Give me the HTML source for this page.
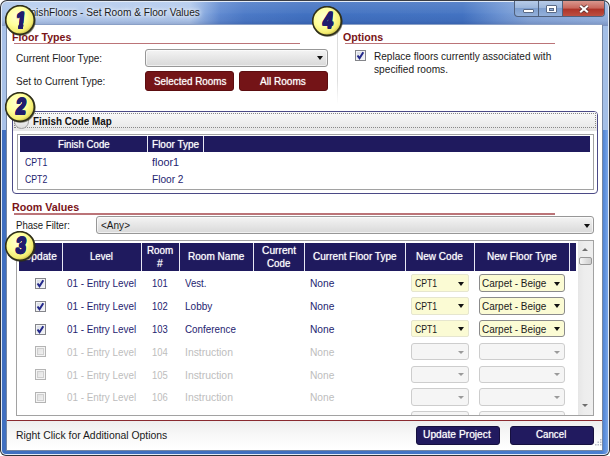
<!DOCTYPE html>
<html>
<head>
<meta charset="utf-8">
<title>FinishFloors - Set Room &amp; Floor Values</title>
<style>
html,body{margin:0;padding:0;}
body{width:610px;height:456px;overflow:hidden;position:relative;background:#fff;font-family:"Liberation Sans",sans-serif;font-size:10.5px;color:#1a1a1a;}
.a{position:absolute;box-sizing:border-box;}
.t{position:absolute;white-space:nowrap;line-height:14px;height:14px;transform-origin:0 0;}
.ul{position:absolute;height:1.5px;background:#bb7478;}
.rbtn{position:absolute;box-sizing:border-box;background:#741417;border:1px solid #5c0d10;border-radius:3px;}
.bbtn{position:absolute;box-sizing:border-box;background:#211a5f;border:1px solid #16103f;border-radius:3px;}
.combo{position:absolute;box-sizing:border-box;border:1px solid #979797;border-radius:3px;background:linear-gradient(#f4f4f4,#e6e6e6 50%,#d9d9d9);box-shadow:inset 0 0 0 1px rgba(255,255,255,.6);}
.hdr{position:absolute;background:#1f1a5e;}
.vs{position:absolute;width:1px;background:#e8e8f4;}
.arr{position:absolute;width:0;height:0;border-left:3.5px solid transparent;border-right:3.5px solid transparent;border-top:4px solid #111;}
.arrg{position:absolute;width:0;height:0;border-left:3px solid transparent;border-right:3px solid transparent;border-top:3.5px solid #9a9a9a;}
.yc{position:absolute;box-sizing:border-box;background:#fbfbd4;border:1px solid #e6e6cf;border-radius:2px;}
.yc2{position:absolute;box-sizing:border-box;background:#fbfbd4;border:1px solid #8b8b8b;border-radius:3px;}
.dc{position:absolute;box-sizing:border-box;background:#f5f5f5;border:1px solid #cdcdcd;border-radius:3px;}
.cb{position:absolute;box-sizing:border-box;width:11px;height:11px;border:1px solid #84858a;background:linear-gradient(135deg,#d4d9e2,#f6f6f9);box-shadow:inset 0 0 0 1px #f2f3f6;}
.cb svg{position:absolute;left:0;top:0;}
.cbd{position:absolute;box-sizing:border-box;width:11px;height:11px;border:1px solid #b4b4b4;background:linear-gradient(135deg,#dcdcdc,#f6f6f6);box-shadow:inset 0 0 0 1px #f4f4f4, inset 0 0 0 2px #cfcfcf;}
.badge{position:absolute;width:30px;height:30px;}
.num{position:absolute;width:30px;height:26px;line-height:26px;text-align:center;font-weight:bold;font-size:22.5px;color:#211c6e;text-shadow:1.00px 0.00px 0 #211c6e,0.71px 0.71px 0 #211c6e,0.00px 1.00px 0 #211c6e,-0.71px 0.71px 0 #211c6e,-1.00px 0.00px 0 #211c6e,-0.71px -0.71px 0 #211c6e,-0.00px -1.00px 0 #211c6e,0.71px -0.71px 0 #211c6e;transform:skewX(-6deg) scaleX(0.8);transform-origin:50% 50%;}
</style>
</head>
<body>
<!-- window frame -->
<div class="a" style="left:0;top:0;width:610px;height:456px;border-radius:7px 7px 6px 6px;background:#30333a;"></div>
<div class="a" style="left:1px;top:1px;width:608px;height:454px;border-radius:6px 6px 5px 5px;background:#e4ecf7;"></div>
<!-- title gradient -->
<div class="a" style="left:2px;top:2px;width:606px;height:128px;border-radius:5px 5px 0 0;background:linear-gradient(to right,#a9c3e8 0%,#b5ccee 5%,#b1c9ec 31%,#86a8de 33.5%,#5f89d0 36%,#4c7ac7 40%,#4171c1 50%,#4373c2 76%,#6a92d2 82%,#88a8da 87%,#98b4e0 100%);"></div>
<div class="a" style="left:2px;top:2px;width:606px;height:24px;border-radius:5px 5px 0 0;background:linear-gradient(to bottom,rgba(255,255,255,.12) 0%,rgba(255,255,255,.04) 45%,rgba(0,0,40,.0) 50%,rgba(0,10,70,.06) 78%,rgba(0,10,70,.20) 100%);"></div>
<!-- sides lower -->
<div class="a" style="left:2px;top:130px;width:606px;height:324px;border-radius:0 0 4px 4px;background:linear-gradient(to right,#3f6fc0 0,#3f6fc0 50%,#4a7fd0 99%,#5f90dc 99.5%,#7aa6e8 100%);"></div>
<div class="a" style="left:2px;top:26px;width:5px;height:104px;background:#a9c2e8;"></div>
<div class="a" style="left:603px;top:26px;width:5px;height:104px;background:#a3bee6;"></div>
<!-- client -->
<div class="a" style="left:6px;top:24px;width:597px;height:427px;background:#fff;border:1px solid #7486a4;border-top-color:#8aa0c6;"></div>
<div class="a" style="left:7px;top:25px;width:595px;height:425px;background:#fff;"></div>

<!-- caption buttons -->
<div class="a" style="left:514px;top:0.5px;width:91px;height:16.5px;border:1px solid #50607c;border-top:none;border-radius:0 0 4px 4px;background:linear-gradient(#b7cbe8,#9db7dc 45%,#7f9fcf 50%,#93b0da);overflow:hidden;">
  <div class="a" style="left:47px;top:0;width:43px;height:16px;background:linear-gradient(#d9978e,#c8665b 45%,#ad3328 50%,#bf5345);"></div>
  <div class="a" style="left:23px;top:0;width:1px;height:16px;background:#50607c;"></div>
  <div class="a" style="left:47px;top:0;width:1px;height:16px;background:#50607c;"></div>
  <div class="a" style="left:8px;top:8px;width:11px;height:4px;background:#fff;border:1px solid #5a6a86;border-radius:1px;"></div>
  <div class="a" style="left:31px;top:4px;width:11px;height:8px;border:1px solid #5a6a86;background:#fff;border-radius:1px;"></div>
  <div class="a" style="left:34px;top:7px;width:5px;height:3px;border:1px solid #5a6a86;background:#8fabd6;"></div>
  <svg class="a" style="left:63px;top:3px;" width="12" height="10" viewBox="0 0 12 10"><path d="M2.2 1.8 L9.8 8.2 M9.8 1.8 L2.2 8.2" stroke="#5a3434" stroke-width="3.6" stroke-linecap="butt"/><path d="M2.2 1.8 L9.8 8.2 M9.8 1.8 L2.2 8.2" stroke="#fff" stroke-width="2.1" stroke-linecap="butt"/></svg>
</div>

<div class="a" style="left:8px;top:0;width:594px;height:1px;background:#3a3d44;"></div>
<!-- Floor types -->
<div class="ul" style="left:14px;top:42.5px;width:286px;"></div>
<div class="combo" style="left:145px;top:49px;width:183px;height:18px;"></div>
<div class="arr" style="left:317px;top:56px;"></div>
<div class="rbtn" style="left:145px;top:71px;width:89px;height:20px;"></div>
<div class="rbtn" style="left:239px;top:71px;width:89px;height:20px;"></div>
<div class="a" style="left:337px;top:26px;width:1px;height:78px;background:linear-gradient(#dcdcdc 0%,#dedede 70%,#fff 100%);"></div>

<!-- Options -->
<div class="ul" style="left:345px;top:42.5px;width:210px;"></div>
<div class="cb" style="left:354.5px;top:50px;"><svg width="9" height="9" viewBox="0 0 9 9"><path d="M1.5 4.5 L3.5 7.2 L7.3 1.2" fill="none" stroke="#23288a" stroke-width="2"/></svg></div>

<!-- Finish code map -->
<div class="a" style="left:11.5px;top:111px;width:586px;height:83px;border:1px solid #4b4a86;border-radius:4px;background:#fff;"></div>
<div class="a" style="left:12.5px;top:112px;width:584px;height:19px;border-radius:3px 3px 0 0;background:linear-gradient(#fafafa,#e6e6e6);"></div>
<div class="a" style="left:13.5px;top:113px;width:582px;height:15px;border:1px dotted #888;"></div>
<div class="a" style="left:14px;top:114px;width:15px;height:15px;border-radius:50%;border:1px solid #a0a0a0;background:linear-gradient(#fff,#dcdcdc);"></div>
<div class="a" style="left:16.5px;top:134px;width:577px;height:56px;border:1px solid #a2a2a2;background:#fff;"></div>
<div class="hdr" style="left:19.5px;top:136px;width:570px;height:15.5px;"></div>
<div class="vs" style="left:147px;top:136px;height:15.5px;"></div>
<div class="vs" style="left:203px;top:136px;height:15.5px;"></div>

<!-- Room values -->
<div class="ul" style="left:14px;top:213px;width:541px;"></div>
<div class="combo" style="left:96px;top:215.8px;width:497.5px;height:18.2px;"></div>
<div class="arr" style="left:583.5px;top:223.5px;"></div>

<!-- grid -->
<div class="a" style="left:15.5px;top:240px;width:578px;height:176px;border:1px solid #a2a2a2;background:#fff;overflow:hidden;"></div>
<div class="hdr" style="left:18.5px;top:242.5px;width:557.5px;height:28.3px;"></div>
<div class="vs" style="left:61.5px;top:242.5px;height:28.3px;"></div>
<div class="vs" style="left:141px;top:242.5px;height:28.3px;"></div>
<div class="vs" style="left:179px;top:242.5px;height:28.3px;"></div>
<div class="vs" style="left:252.5px;top:242.5px;height:28.3px;"></div>
<div class="vs" style="left:303.5px;top:242.5px;height:28.3px;"></div>
<div class="vs" style="left:405px;top:242.5px;height:28.3px;"></div>
<div class="vs" style="left:473.5px;top:242.5px;height:28.3px;"></div>
<div class="vs" style="left:569.3px;top:242.5px;height:28.3px;"></div>
<div class="cb" style="left:35.3px;top:277.9px;"><svg width="9" height="9" viewBox="0 0 9 9"><path d="M1.5 4.5 L3.5 7.2 L7.3 1.2" fill="none" stroke="#23288a" stroke-width="2"/></svg></div>
<div class="yc" style="left:411px;top:274.2px;width:57.5px;height:17.5px;"></div>
<div class="arr" style="left:458px;top:281.5px;"></div>
<div class="yc2" style="left:479px;top:274.2px;width:86.3px;height:17.5px;"></div>
<div class="arr" style="left:553.6px;top:281.5px;"></div>
<div class="cb" style="left:35.3px;top:300.7px;"><svg width="9" height="9" viewBox="0 0 9 9"><path d="M1.5 4.5 L3.5 7.2 L7.3 1.2" fill="none" stroke="#23288a" stroke-width="2"/></svg></div>
<div class="yc" style="left:411px;top:297.0px;width:57.5px;height:17.5px;"></div>
<div class="arr" style="left:458px;top:304.3px;"></div>
<div class="yc2" style="left:479px;top:297.0px;width:86.3px;height:17.5px;"></div>
<div class="arr" style="left:553.6px;top:304.3px;"></div>
<div class="cb" style="left:35.3px;top:323.6px;"><svg width="9" height="9" viewBox="0 0 9 9"><path d="M1.5 4.5 L3.5 7.2 L7.3 1.2" fill="none" stroke="#23288a" stroke-width="2"/></svg></div>
<div class="yc" style="left:411px;top:319.9px;width:57.5px;height:17.5px;"></div>
<div class="arr" style="left:458px;top:327.2px;"></div>
<div class="yc2" style="left:479px;top:319.9px;width:86.3px;height:17.5px;"></div>
<div class="arr" style="left:553.6px;top:327.2px;"></div>
<div class="cbd" style="left:35.3px;top:346.4px;"></div>
<div class="dc" style="left:411px;top:342.7px;width:57.5px;height:17.5px;"></div>
<div class="arrg" style="left:458.3px;top:350.5px;"></div>
<div class="dc" style="left:479px;top:342.7px;width:86.3px;height:17.5px;"></div>
<div class="arrg" style="left:553.8px;top:350.5px;"></div>
<div class="cbd" style="left:35.3px;top:369.2px;"></div>
<div class="dc" style="left:411px;top:365.5px;width:57.5px;height:17.5px;"></div>
<div class="arrg" style="left:458.3px;top:373.3px;"></div>
<div class="dc" style="left:479px;top:365.5px;width:86.3px;height:17.5px;"></div>
<div class="arrg" style="left:553.8px;top:373.3px;"></div>
<div class="cbd" style="left:35.3px;top:392.0px;"></div>
<div class="dc" style="left:411px;top:388.3px;width:57.5px;height:17.5px;"></div>
<div class="arrg" style="left:458.3px;top:396.1px;"></div>
<div class="dc" style="left:479px;top:388.3px;width:86.3px;height:17.5px;"></div>
<div class="arrg" style="left:553.8px;top:396.1px;"></div>
<div class="a" style="left:16.5px;top:411.2px;width:560px;height:3.8px;overflow:hidden;">
<div class="dc" style="left:394.5px;top:0;width:57.5px;height:17.5px;"></div><div class="dc" style="left:462.5px;top:0;width:86.3px;height:17.5px;"></div></div>
<!-- scrollbar -->
<div class="a" style="left:577.5px;top:241px;width:15.5px;height:174px;background:linear-gradient(to right,#e6e6e6,#ededed 40%,#efefef);"></div>
<div class="a" style="left:581.5px;top:247.5px;width:0;height:0;border-left:3px solid transparent;border-right:3px solid transparent;border-bottom:3.5px solid #6e6e6e;"></div>
<div class="a" style="left:578.5px;top:256.5px;width:13px;height:8px;border:1px solid #979797;border-radius:2px;background:linear-gradient(to right,#f5f5f5,#dcdcdc 60%,#d0d0d0);"></div>
<div class="a" style="left:582px;top:404px;width:0;height:0;border-left:3px solid transparent;border-right:3px solid transparent;border-top:3.5px solid #6e6e6e;"></div>

<!-- bottom -->
<div class="a" style="left:7px;top:421px;width:595px;height:29px;background:linear-gradient(#eeeeee,#f8f8f8 50%,#ffffff);"></div>
<div class="a" style="left:7px;top:420px;width:595px;height:1px;background:#8a2a30;"></div>
<div class="bbtn" style="left:415.5px;top:425.5px;width:84px;height:19px;"></div>
<div class="bbtn" style="left:509.5px;top:425.5px;width:84px;height:19px;"></div>
<svg class="a" style="left:593px;top:438px;" width="10" height="11" viewBox="0 0 10 11"><g fill="#b8bcc8"><rect x="7" y="1" width="1.5" height="1.5"/><rect x="4.5" y="3.5" width="1.5" height="1.5"/><rect x="7" y="3.5" width="1.5" height="1.5"/><rect x="2" y="6" width="1.5" height="1.5"/><rect x="4.5" y="6" width="1.5" height="1.5"/><rect x="7" y="6" width="1.5" height="1.5"/></g></svg>

<div class="t" style="left:22.0px;top:5.0px;font-size:10.5px;color:#1c1c1c;transform:scaleX(0.966);text-shadow:0 0 4px #fff,0 0 6px #fff;">FinishFloors - Set Room &amp; Floor Values</div>
<div class="t" style="left:11.5px;top:30.0px;font-size:11px;color:#7a1418;transform:scaleX(0.964);font-weight:bold;">Floor Types</div>
<div class="t" style="left:15.7px;top:51.0px;font-size:10.5px;color:#1a1a1a;transform:scaleX(0.954);">Current Floor Type:</div>
<div class="t" style="left:15.7px;top:74.0px;font-size:10.5px;color:#1a1a1a;transform:scaleX(0.952);">Set to Current Type:</div>
<div class="t" style="left:153.6px;top:74.0px;font-size:10.5px;color:#fff;text-shadow:0 0 1px rgba(255,255,255,.75);transform:scaleX(0.940);">Selected Rooms</div>
<div class="t" style="left:260.0px;top:74.0px;font-size:10.5px;color:#fff;text-shadow:0 0 1px rgba(255,255,255,.75);transform:scaleX(0.957);">All Rooms</div>
<div class="t" style="left:343.3px;top:30.0px;font-size:11px;color:#7a1418;transform:scaleX(0.967);font-weight:bold;">Options</div>
<div class="t" style="left:374.3px;top:48.5px;font-size:10.5px;color:#1a1a1a;transform:scaleX(0.958);">Replace floors currently associated with</div>
<div class="t" style="left:374.3px;top:61.5px;font-size:10.5px;color:#1a1a1a;transform:scaleX(0.968);">specified rooms.</div>
<div class="t" style="left:32.8px;top:113.5px;font-size:10.5px;color:#111;transform:scaleX(0.937);font-weight:bold;">Finish Code Map</div>
<div class="t" style="left:57.7px;top:136.5px;font-size:10.5px;color:#fff;text-shadow:0 0 1px rgba(255,255,255,.75);transform:scaleX(0.923);">Finish Code</div>
<div class="t" style="left:151.8px;top:136.5px;font-size:10.5px;color:#fff;text-shadow:0 0 1px rgba(255,255,255,.75);transform:scaleX(0.955);">Floor Type</div>
<div class="t" style="left:24.9px;top:154.5px;font-size:10.5px;color:#1e2470;transform:scaleX(0.831);">CPT1</div>
<div class="t" style="left:151.8px;top:154.5px;font-size:10.5px;color:#1e2470;transform:scaleX(1.028);">floor1</div>
<div class="t" style="left:24.9px;top:172.0px;font-size:10.5px;color:#1e2470;transform:scaleX(0.831);">CPT2</div>
<div class="t" style="left:151.8px;top:172.0px;font-size:10.5px;color:#1e2470;transform:scaleX(0.964);">Floor 2</div>
<div class="t" style="left:11.5px;top:200.0px;font-size:11px;color:#7a1418;transform:scaleX(0.973);font-weight:bold;">Room Values</div>
<div class="t" style="left:15.7px;top:218.0px;font-size:10.5px;color:#1a1a1a;transform:scaleX(0.913);">Phase Filter:</div>
<div class="t" style="left:101.0px;top:218.0px;font-size:10.5px;color:#1a1a1a;transform:scaleX(0.955);">&lt;Any&gt;</div>
<div class="t" style="left:23.6px;top:249.0px;font-size:10.5px;color:#fff;text-shadow:0 0 1px rgba(255,255,255,.75);transform:scaleX(0.969);">Update</div>
<div class="t" style="left:90.0px;top:249.0px;font-size:10.5px;color:#fff;text-shadow:0 0 1px rgba(255,255,255,.75);transform:scaleX(0.912);">Level</div>
<div class="t" style="left:147.0px;top:242.5px;font-size:10.5px;color:#fff;text-shadow:0 0 1px rgba(255,255,255,.75);transform:scaleX(0.939);">Room</div>
<div class="t" style="left:157.3px;top:256.0px;font-size:10.5px;color:#fff;text-shadow:0 0 1px rgba(255,255,255,.75);transform:scaleX(0.993);">#</div>
<div class="t" style="left:188.3px;top:249.0px;font-size:10.5px;color:#fff;text-shadow:0 0 1px rgba(255,255,255,.75);transform:scaleX(0.957);">Room Name</div>
<div class="t" style="left:261.5px;top:242.5px;font-size:10.5px;color:#fff;text-shadow:0 0 1px rgba(255,255,255,.75);transform:scaleX(0.974);">Current</div>
<div class="t" style="left:267.0px;top:255.5px;font-size:10.5px;color:#fff;text-shadow:0 0 1px rgba(255,255,255,.75);transform:scaleX(0.932);">Code</div>
<div class="t" style="left:313.0px;top:249.0px;font-size:10.5px;color:#fff;text-shadow:0 0 1px rgba(255,255,255,.75);transform:scaleX(0.958);">Current Floor Type</div>
<div class="t" style="left:416.2px;top:249.0px;font-size:10.5px;color:#fff;text-shadow:0 0 1px rgba(255,255,255,.75);transform:scaleX(0.954);">New Code</div>
<div class="t" style="left:486.6px;top:249.0px;font-size:10.5px;color:#fff;text-shadow:0 0 1px rgba(255,255,255,.75);transform:scaleX(0.952);">New Floor Type</div>
<div class="t" style="left:66.9px;top:276.0px;font-size:10.5px;color:#1e2470;transform:scaleX(0.940);">01 - Entry Level</div>
<div class="t" style="left:152.3px;top:276.0px;font-size:10.5px;color:#1e2470;transform:scaleX(0.896);">101</div>
<div class="t" style="left:184.6px;top:276.0px;font-size:10.5px;color:#1e2470;transform:scaleX(0.920);">Vest.</div>
<div class="t" style="left:309.6px;top:276.0px;font-size:10.5px;color:#1e2470;transform:scaleX(0.972);">None</div>
<div class="t" style="left:415.0px;top:276.0px;font-size:10.5px;color:#1a1a1a;transform:scaleX(0.827);">CPT1</div>
<div class="t" style="left:482.1px;top:276.0px;font-size:10.5px;color:#1a1a1a;transform:scaleX(0.951);">Carpet - Beige</div>
<div class="t" style="left:66.9px;top:299.0px;font-size:10.5px;color:#1e2470;transform:scaleX(0.940);">01 - Entry Level</div>
<div class="t" style="left:152.3px;top:299.0px;font-size:10.5px;color:#1e2470;transform:scaleX(0.896);">102</div>
<div class="t" style="left:184.6px;top:299.0px;font-size:10.5px;color:#1e2470;transform:scaleX(0.954);">Lobby</div>
<div class="t" style="left:309.6px;top:299.0px;font-size:10.5px;color:#1e2470;transform:scaleX(0.972);">None</div>
<div class="t" style="left:415.0px;top:299.0px;font-size:10.5px;color:#1a1a1a;transform:scaleX(0.827);">CPT1</div>
<div class="t" style="left:482.1px;top:299.0px;font-size:10.5px;color:#1a1a1a;transform:scaleX(0.951);">Carpet - Beige</div>
<div class="t" style="left:66.9px;top:321.5px;font-size:10.5px;color:#1e2470;transform:scaleX(0.940);">01 - Entry Level</div>
<div class="t" style="left:152.3px;top:321.5px;font-size:10.5px;color:#1e2470;transform:scaleX(0.896);">103</div>
<div class="t" style="left:184.6px;top:321.5px;font-size:10.5px;color:#1e2470;transform:scaleX(0.937);">Conference</div>
<div class="t" style="left:309.6px;top:321.5px;font-size:10.5px;color:#1e2470;transform:scaleX(0.972);">None</div>
<div class="t" style="left:415.0px;top:321.5px;font-size:10.5px;color:#1a1a1a;transform:scaleX(0.827);">CPT1</div>
<div class="t" style="left:482.1px;top:321.5px;font-size:10.5px;color:#1a1a1a;transform:scaleX(0.951);">Carpet - Beige</div>
<div class="t" style="left:66.9px;top:344.5px;font-size:10.5px;color:#bdbdbd;transform:scaleX(0.940);">01 - Entry Level</div>
<div class="t" style="left:152.3px;top:344.5px;font-size:10.5px;color:#bdbdbd;transform:scaleX(0.896);">104</div>
<div class="t" style="left:184.6px;top:344.5px;font-size:10.5px;color:#bdbdbd;transform:scaleX(0.989);">Instruction</div>
<div class="t" style="left:309.6px;top:344.5px;font-size:10.5px;color:#bdbdbd;transform:scaleX(0.972);">None</div>
<div class="t" style="left:66.9px;top:367.5px;font-size:10.5px;color:#bdbdbd;transform:scaleX(0.940);">01 - Entry Level</div>
<div class="t" style="left:152.3px;top:367.5px;font-size:10.5px;color:#bdbdbd;transform:scaleX(0.896);">105</div>
<div class="t" style="left:184.6px;top:367.5px;font-size:10.5px;color:#bdbdbd;transform:scaleX(0.989);">Instruction</div>
<div class="t" style="left:309.6px;top:367.5px;font-size:10.5px;color:#bdbdbd;transform:scaleX(0.972);">None</div>
<div class="t" style="left:66.9px;top:390.0px;font-size:10.5px;color:#bdbdbd;transform:scaleX(0.940);">01 - Entry Level</div>
<div class="t" style="left:152.3px;top:390.0px;font-size:10.5px;color:#bdbdbd;transform:scaleX(0.896);">106</div>
<div class="t" style="left:184.6px;top:390.0px;font-size:10.5px;color:#bdbdbd;transform:scaleX(0.989);">Instruction</div>
<div class="t" style="left:309.6px;top:390.0px;font-size:10.5px;color:#bdbdbd;transform:scaleX(0.972);">None</div>
<div class="t" style="left:15.8px;top:427.5px;font-size:10.5px;color:#1a1a1a;transform:scaleX(0.989);">Right Click for Additional Options</div>
<div class="t" style="left:423.4px;top:427.0px;font-size:10.5px;color:#fff;text-shadow:0 0 1px rgba(255,255,255,.75);transform:scaleX(0.976);">Update Project</div>
<div class="t" style="left:536.0px;top:427.0px;font-size:10.5px;color:#fff;text-shadow:0 0 1px rgba(255,255,255,.75);transform:scaleX(0.927);">Cancel</div>

<!-- badges -->
<svg width="0" height="0" style="position:absolute"><defs><radialGradient id="bg" cx="40%" cy="36%" r="68%"><stop offset="0" stop-color="#ffffd2"/><stop offset="0.5" stop-color="#ffff9c"/><stop offset="0.82" stop-color="#f3ec70"/><stop offset="1" stop-color="#b9b040"/></radialGradient></defs></svg>
<svg class="badge" style="left:5.1px;top:5.3px;width:34px;height:34px;" width="34" height="34" viewBox="0 0 34 34"><circle cx="15.7" cy="15.8" r="15.0" fill="#2b2b18" opacity="0.55"/><circle cx="15" cy="15" r="14.35" fill="url(#bg)" stroke="#30301a" stroke-width="1.7"/></svg>
<div class="num" style="left:5.6px;top:7.8px;clip-path:polygon(0 0,30px 0,30px 15.2px,18.3px 15.2px,18.3px 26px,12.8px 26px,12.8px 15.2px,0 15.2px);">1</div>
<svg class="badge" style="left:312.1px;top:5.5px;width:34px;height:34px;" width="34" height="34" viewBox="0 0 34 34"><circle cx="15.7" cy="15.8" r="15.0" fill="#2b2b18" opacity="0.55"/><circle cx="15" cy="15" r="14.35" fill="url(#bg)" stroke="#30301a" stroke-width="1.7"/></svg>
<div class="num" style="left:312.6px;top:8.0px;">4</div>
<svg class="badge" style="left:5.2px;top:91.6px;width:34px;height:34px;" width="34" height="34" viewBox="0 0 34 34"><circle cx="15.7" cy="15.8" r="15.0" fill="#2b2b18" opacity="0.55"/><circle cx="15" cy="15" r="14.35" fill="url(#bg)" stroke="#30301a" stroke-width="1.7"/></svg>
<div class="num" style="left:5.7px;top:94.1px;">2</div>
<svg class="badge" style="left:5.2px;top:230.9px;width:34px;height:34px;" width="34" height="34" viewBox="0 0 34 34"><circle cx="15.7" cy="15.8" r="15.0" fill="#2b2b18" opacity="0.55"/><circle cx="15" cy="15" r="14.35" fill="url(#bg)" stroke="#30301a" stroke-width="1.7"/></svg>
<div class="num" style="left:5.7px;top:233.4px;">3</div>
</body>
</html>
